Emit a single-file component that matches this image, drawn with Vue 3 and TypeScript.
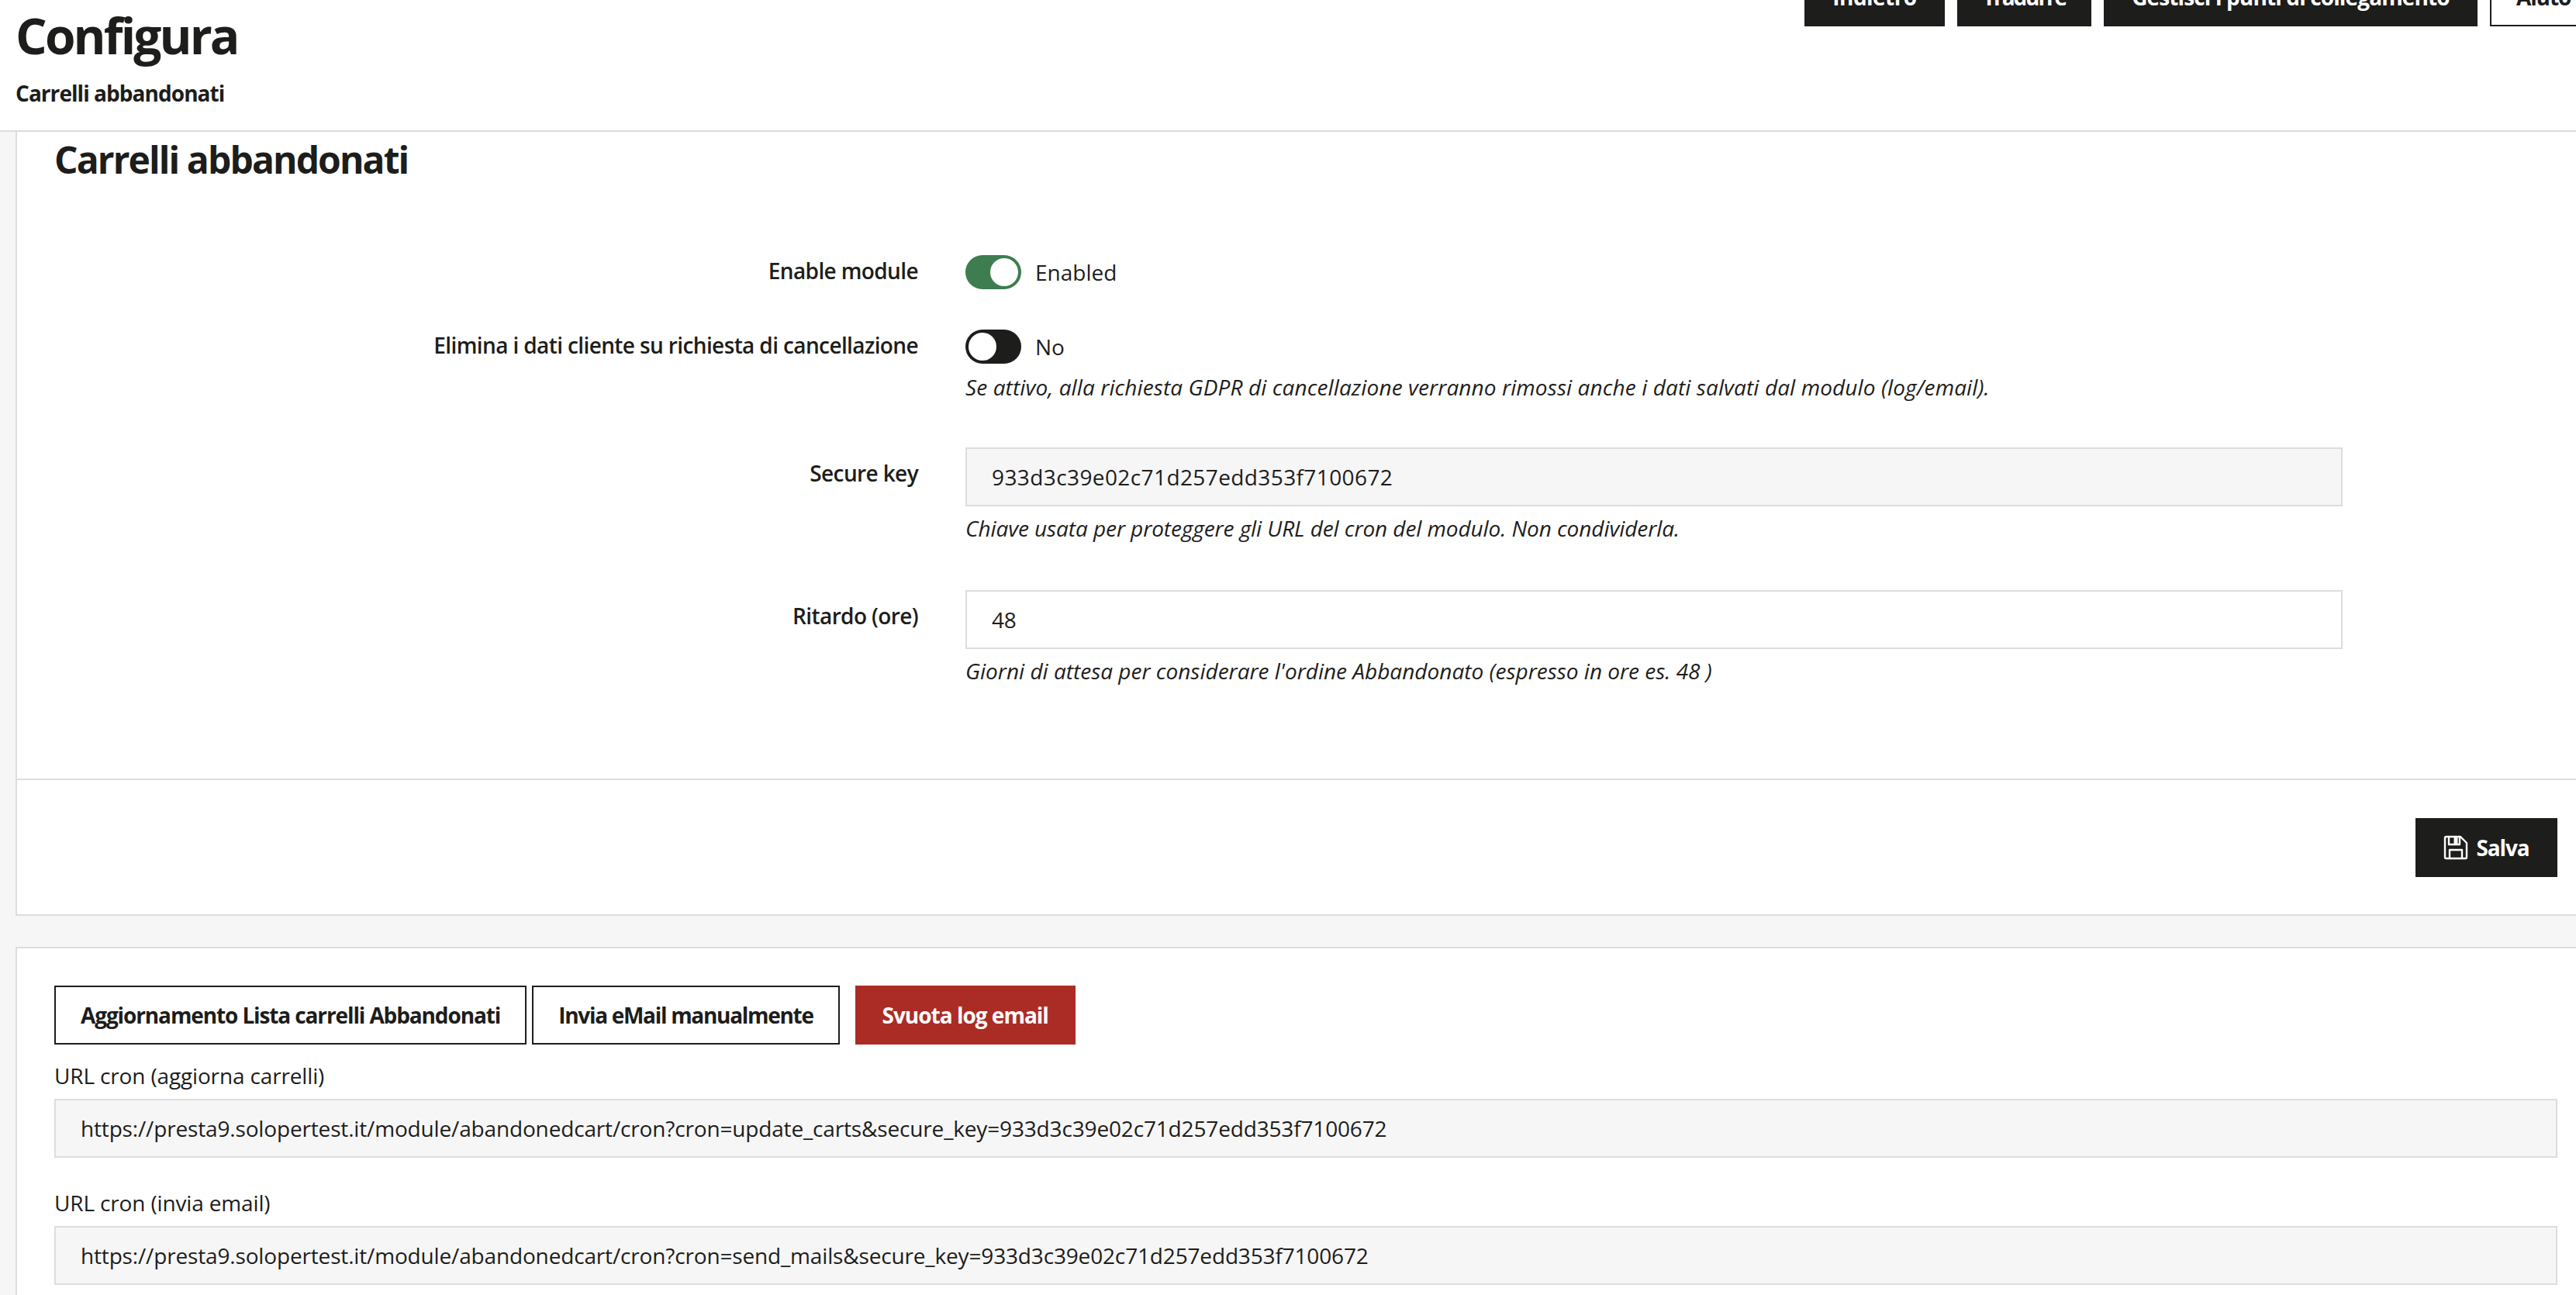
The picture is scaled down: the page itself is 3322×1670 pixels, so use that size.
<script setup lang="ts">
const crons = [
  { label: 'URL cron (aggiorna carrelli)', url: 'https://presta9.solopertest.it/module/abandonedcart/cron?cron=update_carts&secure_key=933d3c39e02c71d257edd353f7100672' },
  { label: 'URL cron (invia email)', url: 'https://presta9.solopertest.it/module/abandonedcart/cron?cron=send_mails&secure_key=933d3c39e02c71d257edd353f7100672' }
]
</script>

<template>
  <div class="page">
    <header class="head">
      <div class="head-text">
        <h1>Configura</h1>
        <div class="crumb">Carrelli abbandonati</div>
      </div>
      <div class="toolbar">
        <a class="btn dark t1">Indietro</a>
        <a class="btn dark t2">Tradurre</a>
        <a class="btn dark t3">Gestisci i punti di collegamento</a>
        <a class="btn outline">Aiuto</a>
      </div>
    </header>
    <main class="main">
      <section class="card first">
        <h2>Carrelli abbandonati</h2>
        <div class="form">
          <div class="row r1">
            <label class="lab">Enable module</label>
            <div class="ctl">
              <div class="sw-line"><span class="sw on"><i></i></span><span>Enabled</span></div>
            </div>
          </div>
          <div class="row r2">
            <label class="lab">Elimina i dati cliente su richiesta di cancellazione</label>
            <div class="ctl">
              <div class="sw-line"><span class="sw off"><i></i></span><span>No</span></div>
              <p class="help">Se attivo, alla richiesta GDPR di cancellazione verranno rimossi anche i dati salvati dal modulo (log/email).</p>
            </div>
          </div>
          <div class="row r3">
            <label class="lab">Secure key</label>
            <div class="ctl">
              <div class="input ro key">933d3c39e02c71d257edd353f7100672</div>
              <p class="help">Chiave usata per proteggere gli URL del cron del modulo. Non condividerla.</p>
            </div>
          </div>
          <div class="row r4">
            <label class="lab">Ritardo (ore)</label>
            <div class="ctl">
              <div class="input">48</div>
              <p class="help">Giorni di attesa per considerare l'ordine Abbandonato (espresso in ore es. 48 )</p>
            </div>
          </div>
        </div>
        <div class="foot">
          <a class="btn dark save">
            <svg width="32" height="32" viewBox="0 0 32 32" fill="none" stroke="#fff" stroke-width="2.4" stroke-linejoin="round">
              <path d="M2 3.500A1.500 1.500 0 0 1 3.500 2H22l8 8v18.500a1.500 1.500 0 0 1-1.500 1.500h-25A1.500 1.500 0 0 1 2 28.500Z" />
              <path d="M7 2v10h14V2" />
              <path d="M16 3v8" stroke-width="5" />
              <path d="M8 30V19h16v11" />
            </svg>
            Salva
          </a>
        </div>
      </section>
      <section class="card second">
        <div class="actions">
          <a class="btn outline">Aggiornamento Lista carrelli Abbandonati</a>
          <a class="btn outline b2">Invia eMail manualmente</a>
          <a class="btn red">Svuota log email</a>
        </div>
        <div v-for="c in crons" :key="c.label" class="cron">
          <label class="cron-lab">{{ c.label }}</label>
          <div class="input ro">{{ c.url }}</div>
        </div>
      </section>
    </main>
  </div>
</template>

<style>
html, body { margin: 0; background: #f6f6f6; }
</style>

<style scoped>
.page {
  width: 3322px;
  height: 1670px;
  overflow: hidden;
  background: #f6f6f6;
  color: #1d1d1b;
  font-family: "Open Sans", "Noto Sans", sans-serif;
  font-size: 28px;
  box-sizing: border-box;
}
.head {
  height: 170px;
  box-sizing: border-box;
  background: #fff;
  border-bottom: 2px solid #ddd;
  display: flex;
  justify-content: space-between;
  padding-left: 20px;
}
h1 {
  margin: 0;
  font-size: 64px;
  line-height: 80px;
  font-weight: 700;
  padding-top: 6px;
  letter-spacing: -2.9px;
}
.crumb {
  font-weight: 700;
  font-size: 28px;
  line-height: 36px;
  margin-top: 16px;
  letter-spacing: -0.95px;
}
.toolbar {
  display: flex;
  gap: 16px;
  margin-top: -42px;
  height: 76px;
  width: 995px;
  flex: none;
}
.btn {
  height: 76px;
  box-sizing: border-box;
  display: inline-flex;
  align-items: center;
  justify-content: center;
  padding: 0 32px;
  font-weight: 700;
  white-space: nowrap;
  letter-spacing: -1.12px;
  flex: none;
}
.t1 { width: 181px; padding: 0; letter-spacing: -0.55px; }
.t2 { width: 173px; padding: 0; letter-spacing: -2.1px; }
.t3 { width: 482px; padding: 0; letter-spacing: -0.87px; }
.dark { background: #1d1d1b; color: #fff; }
.outline { border: 2px solid #1d1d1b; background: #fff; color: #1d1d1b; }
.red { background: #ab2b25; color: #fff; letter-spacing: -1px; width: 284px; padding: 0; margin-left: 20px; }
.main { padding-left: 20px; }
.card {
  background: #fff;
  border: 2px solid #ddd;
  margin-right: -2px;
  box-sizing: border-box;
}
.first { border-top: 0; height: 1011px; }
.second { margin-top: 40px; padding: 48px 24px 0 48px; height: 460px; }
h2 {
  margin: 0;
  padding: 6px 0 0 48px;
  font-size: 48px;
  line-height: 60px;
  font-weight: 700;
  letter-spacing: -1.9px;
}
.form { height: 770px; box-sizing: border-box; padding-top: 93px; border-bottom: 2px solid #ddd; }
.row { display: flex; gap: 61px; }
.lab {
  width: 1162px;
  flex: none;
  text-align: right;
  font-weight: 600;
  line-height: 36px;
  letter-spacing: -0.62px;
  padding-top: 2px;
}
.ctl { width: 1776px; }
.r1 { height: 96px; }
.r2 { height: 152px; }
.r3 { height: 184px; }
.r3 .lab, .r4 .lab { padding-top: 15px; }
.sw-line { display: flex; align-items: center; gap: 18px; height: 44px; font-weight: 400; }
.sw {
  width: 72px;
  height: 44px;
  border-radius: 22px;
  box-sizing: border-box;
  padding: 4px;
  display: flex;
  flex: none;
}
.sw i { width: 36px; height: 36px; border-radius: 50%; background: #fff; display: block; }
.on { background: #3e7d50; justify-content: flex-end; }
.off { background: #1d1d1b; }
.help {
  margin: 0;
  font-style: italic;
  font-size: 28px;
  line-height: 36px;
  margin-top: 10px;
}
.r2 .help { margin-top: 12px; letter-spacing: 0.1px; }
.r3 .help { letter-spacing: -0.08px; }
.input {
  height: 76px;
  box-sizing: border-box;
  border: 2px solid #ddd;
  background: #fff;
  display: flex;
  align-items: center;
  padding: 0 32px;
  white-space: nowrap;
  letter-spacing: -0.16px;
}
.key { letter-spacing: 0.4px; }
.ro { background: #f6f6f6; }
.foot { display: flex; justify-content: flex-end; padding: 49px 24px 0 0; }
.save { padding: 0; width: 183px; gap: 10px; }
.actions { display: flex; height: 76px; }
.b2 { margin-left: 7px; letter-spacing: -1.3px; }
.cron-lab { display: block; line-height: 36px; margin-top: 22px; margin-bottom: 12px; font-weight: 500; letter-spacing: -0.15px; }
.cron + .cron .cron-lab { margin-top: 40px; }
</style>
